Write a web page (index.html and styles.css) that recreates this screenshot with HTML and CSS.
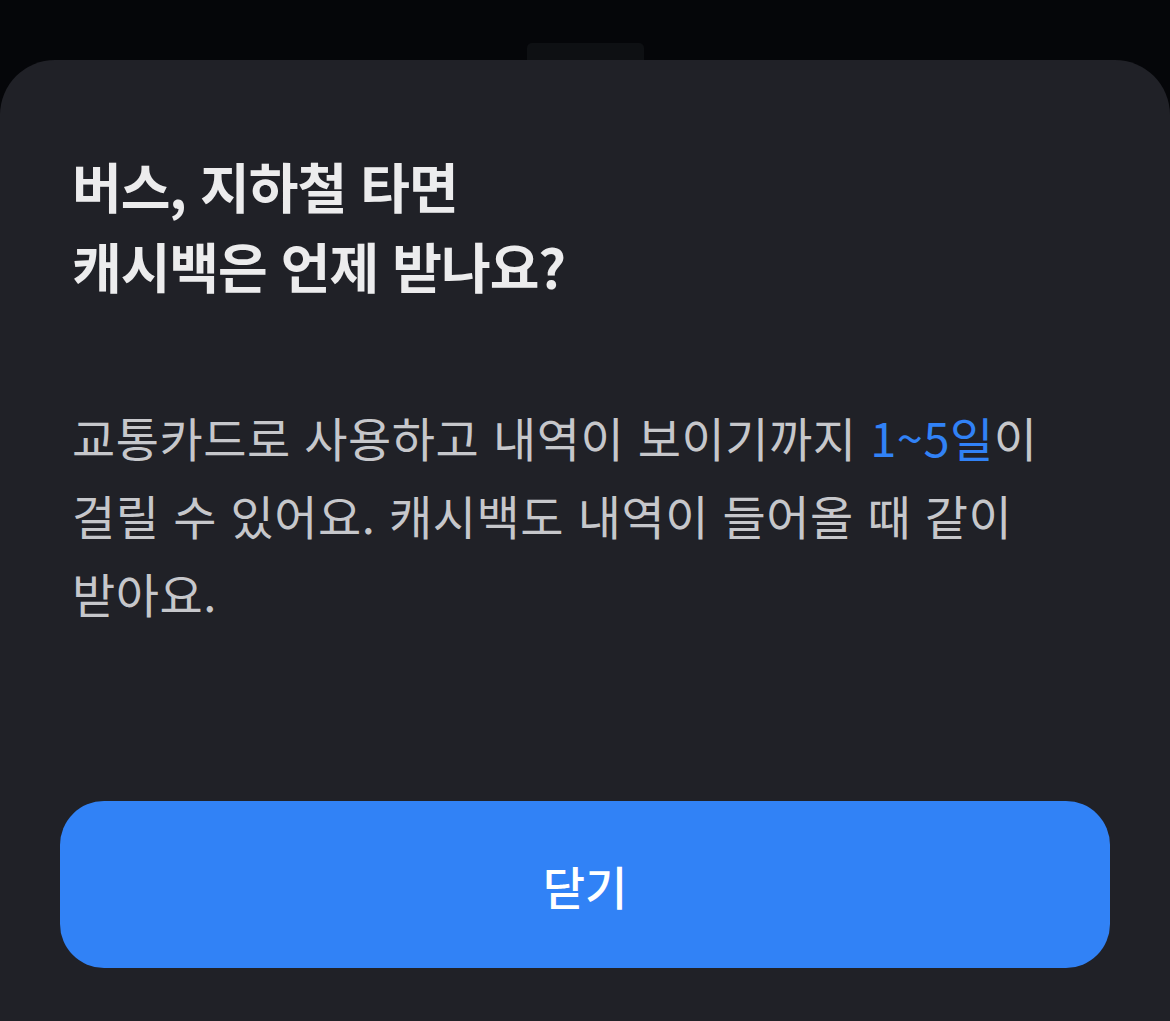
FILE: index.html
```html
<!DOCTYPE html>
<html lang="ko">
<head>
<meta charset="utf-8">
<link rel="stylesheet" href="styles.css">
</head>
<body>
<div class="screen">
  <div class="handle"></div>
  <div class="sheet">
    <h1 class="title">버스, 지하철 타면<br>캐시백은 언제 받나요?</h1>
    <p class="desc">교통카드로 사용하고 내역이 보이기까지 <span class="hl">1~5일</span>이 걸릴 수 있어요. 캐시백도 내역이 들어올 때 같이 받아요.</p>
    <button class="btn">닫기</button>
  </div>
</div>
</body>
</html>
```
FILE: styles.css
```css
html, body {
  margin: 0;
  padding: 0;
  background: #050609;
  height: 100%;
  overflow: hidden;
}
.screen {
  height: 1021px;
  display: flex;
  flex-direction: column;
  align-items: center;
  font-family: "Noto Sans CJK KR", "Noto Sans", sans-serif;
}
.handle {
  margin-top: 43px;
  width: 117px;
  height: 17px;
  background: #0e1013;
  border-radius: 5px 5px 0 0;
  flex: none;
}
.sheet {
  align-self: stretch;
  flex: 1;
  background: #202127;
  border-radius: 55px 55px 0 0;
  padding: 86px 60px 0 72px;
  display: flex;
  flex-direction: column;
}
.title {
  margin: 0;
  font-size: 54px;
  font-weight: 700;
  line-height: 80px;
  color: #ececed;
  letter-spacing: -1px;
}
.desc {
  margin: 92px 0 0 0;
  font-size: 47px;
  font-weight: 400;
  line-height: 78px;
  color: #c6c7cb;
  letter-spacing: 0.5px;
  max-width: 1010px;
  word-break: keep-all;
}
.hl {
  color: #3182f6;
}
.btn {
  margin: auto 0 53px -12px;
  width: 1050px;
  height: 167px;
  border: none;
  border-radius: 44px;
  background: #3182f6;
  color: #ffffff;
  font-family: inherit;
  font-size: 46px;
  font-weight: 500;
}
```
